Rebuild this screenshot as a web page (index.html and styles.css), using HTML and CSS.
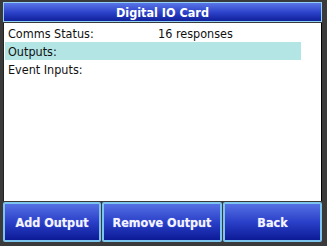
FILE: index.html
```html
<!DOCTYPE html>
<html lang="en">
    <head>
        <meta charset="UTF-8" />
        <title>Digital IO Card</title>
        <link rel="stylesheet" href="styles.css">
    </head>
    <body>
        <div class="screen">
            <div class="title-bar">Digital IO Card</div>
            <div class="content">
                <div class="row">
                    <span class="label">Comms Status:</span>
                    <span class="value">16 responses</span>
                </div>
                <div class="row selected">
                    <span class="label">Outputs:</span>
                </div>
                <div class="row">
                    <span class="label">Event Inputs:</span>
                </div>
            </div>
            <div class="buttons">
                <button class="btn btn-add">Add Output</button>
                <button class="btn btn-remove">Remove Output</button>
                <button class="btn btn-back">Back</button>
            </div>
        </div>
    </body>
</html>
```

FILE: styles.css
```css
html {
    font-family: "DejaVu Sans Condensed", "DejaVu Sans", sans-serif;
    font-stretch: condensed;
}

body {
    margin: 0;
    background: #3a3a3a;
}

.screen {
    width: 327px;
    height: 246px;
    display: flex;
    flex-direction: column;
    padding: 2px 5px 4px 3px;
    box-sizing: border-box;
    gap: 1px;
}

.title-bar {
    height: 20px;
    box-sizing: border-box;
    border: 1px solid #8fd0f4;
    background: linear-gradient(#5a76e6, #2a40c8 55%, #10209a);
    color: #fff;
    font-weight: bold;
    font-size: 12.5px;
    display: flex;
    align-items: center;
    justify-content: center;
}

.content {
    flex: 1;
    background: #fff;
    border-right: 1px solid #000;
    border-left: 1px solid #222;
    padding: 1px 0 0 1px;
    display: flex;
    flex-direction: column;
}

.row {
    height: 18px;
    width: 296px;
    display: flex;
    align-items: center;
    font-size: 12.5px;
    color: #111;
    padding-left: 3px;
    box-sizing: border-box;
}

.row.selected {
    background: #b3e5e5;
}

.label {
    width: 150px;
}

.buttons {
    height: 40px;
    display: flex;
    gap: 1px;
}

.btn {
    border: 2px solid #7cc4ee;
    border-radius: 2px;
    background: linear-gradient(#5570e4, #2a40c8 50%, #0c1a96);
    color: #f4f4ff;
    font-family: "DejaVu Sans Condensed", "DejaVu Sans", sans-serif;
    font-stretch: condensed;
    font-weight: bold;
    font-size: 12.5px;
    text-shadow: 0 0 1px #8090ff;
    padding: 0;
}

.btn-add {
    width: 98px;
}

.btn-remove {
    width: 120px;
}

.btn-back {
    flex: 1;
}
```
